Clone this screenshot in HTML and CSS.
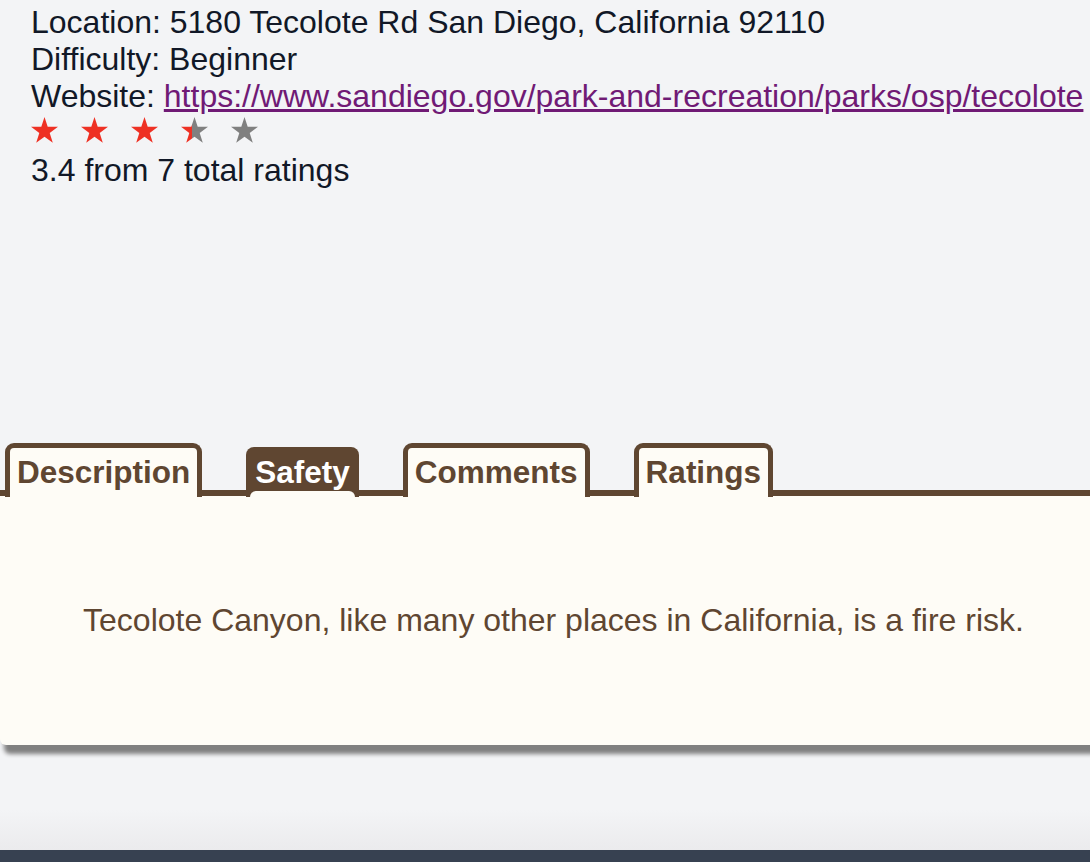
FILE: index.html
```html
<!DOCTYPE html>
<html lang="en">
<head>
<meta charset="utf-8">
<title>Tecolote Canyon</title>
<link rel="stylesheet" href="styles.css">
</head>
<body>
<div class="page">
  <main class="main">
    <section class="info">
      <div>Location: 5180 Tecolote Rd San Diego, California 92110</div>
      <div>Difficulty: Beginner</div>
      <div>Website: <a class="link" href="#">https://www.sandiego.gov/park-and-recreation/parks/osp/tecolote</a></div>
      <div class="stars">
        <svg class="star" viewBox="0 0 27 26"><polygon class="full" points="13.5,0 16.7,9.7 27,9.8 18.7,15.9 21.8,25.7 13.5,19.7 5.2,25.7 8.3,15.9 0,9.8 10.3,9.7"/></svg>
        <svg class="star" viewBox="0 0 27 26"><polygon class="full" points="13.5,0 16.7,9.7 27,9.8 18.7,15.9 21.8,25.7 13.5,19.7 5.2,25.7 8.3,15.9 0,9.8 10.3,9.7"/></svg>
        <svg class="star" viewBox="0 0 27 26"><polygon class="full" points="13.5,0 16.7,9.7 27,9.8 18.7,15.9 21.8,25.7 13.5,19.7 5.2,25.7 8.3,15.9 0,9.8 10.3,9.7"/></svg>
        <svg class="star" viewBox="0 0 27 26"><defs><linearGradient id="half" x1="0" x2="1" y1="0" y2="0"><stop offset="0.42" stop-color="#ee3124"/><stop offset="0.42" stop-color="#808080"/></linearGradient></defs><polygon fill="url(#half)" points="13.5,0 16.7,9.7 27,9.8 18.7,15.9 21.8,25.7 13.5,19.7 5.2,25.7 8.3,15.9 0,9.8 10.3,9.7"/></svg>
        <svg class="star" viewBox="0 0 27 26"><polygon class="empty" points="13.5,0 16.7,9.7 27,9.8 18.7,15.9 21.8,25.7 13.5,19.7 5.2,25.7 8.3,15.9 0,9.8 10.3,9.7"/></svg>
      </div>
      <div>3.4 from 7 total ratings</div>
    </section>

    <section class="tabbed">
      <nav class="tabs">
        <div class="tab">Description</div>
        <div class="tab tab-active">Safety</div>
        <div class="tab">Comments</div>
        <div class="tab">Ratings</div>
      </nav>
      <div class="panel">
        <p class="panel-text">Tecolote Canyon, like many other places in California, is a fire risk.</p>
      </div>
    </section>
  </main>
  <footer class="footer"></footer>
</div>
</body>
</html>
```
FILE: styles.css
```css
html, body {
  margin: 0;
  padding: 0;
  overflow-x: hidden;
}

body {
  background: #f3f4f6;
  font-family: "Liberation Sans", Arial, sans-serif;
  color: #111827;
}

.page {
  display: flex;
  flex-direction: column;
  min-height: 862px;
}

.main {
  flex: 1;
  background: linear-gradient(to bottom, #f3f4f6 0, #f3f4f6 810px, #ebebed 850px);
}

.info {
  padding: 4px 0 0 31px;
  font-size: 32px;
  line-height: 36.8px;
}

.link {
  color: #701a75;
  text-decoration: underline;
}

.stars {
  display: flex;
  align-items: flex-start;
  gap: 23px;
  height: 37.5px;
  padding-top: 3px;
  box-sizing: border-box;
}

.star {
  width: 27px;
  height: 26px;
  display: block;
}

.full { fill: #ee3124; }
.empty { fill: #808080; }

.tabbed {
  margin-top: 254px;
}

.tabs {
  display: flex;
  align-items: flex-end;
  gap: 44px;
  padding-left: 5px;
  margin-bottom: -7px;
  position: relative;
  z-index: 1;
}

.tab {
  font-size: 31.5px;
  font-weight: bold;
  line-height: 36px;
  color: #5f4631;
  background: #fefcf6;
  border: 5px solid #5f4631;
  border-bottom: 0;
  border-radius: 9px 9px 0 0;
  padding: 6px 7px 7px;
}

.tab-active {
  position: relative;
  background: #5f4631;
  color: #ffffff;
  border: 0;
  padding: 7px 9px 7px;
  border-radius: 8px 8px 0 0;
}

.tab-active::after {
  content: "";
  position: absolute;
  left: 4px;
  right: 4px;
  bottom: 0;
  height: 6px;
  background: #fefcf6;
  border-radius: 6px 6px 0 0;
}

.panel {
  width: calc(100% + 17px);
  background: #fefcf6;
  border-top: 6px solid #5f4631;
  border-radius: 0 0 0 6px;
  box-shadow: 4px 9px 4px #808080;
  padding: 106px 0 106px;
}

.panel-text {
  margin: 0;
  text-align: center;
  font-size: 32px;
  line-height: 37px;
  color: #5f4631;
}

.footer {
  height: 12px;
  background: #374151;
}
```
